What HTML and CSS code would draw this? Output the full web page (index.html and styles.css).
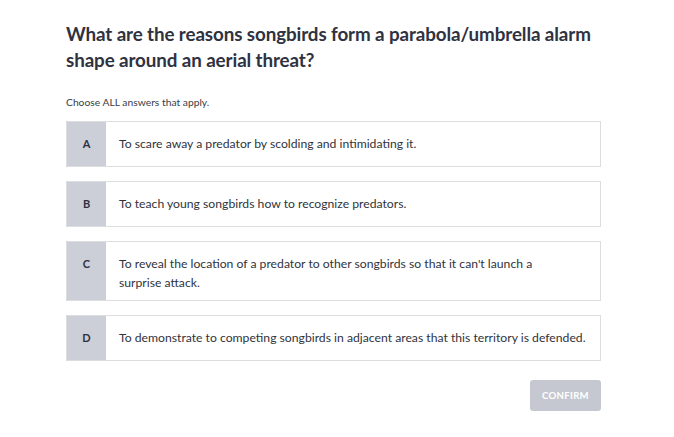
FILE: index.html
```html
<!DOCTYPE html>
<html>
<head>
<meta charset="utf-8">
<link rel="stylesheet" href="styles.css">
</head>
<body>
<div class="quiz">
  <h1 class="title">What are the reasons songbirds form a parabola/umbrella alarm shape around an aerial threat?</h1>
  <p class="hint">Choose ALL answers that apply.</p>
  <div class="options">
    <div class="option"><div class="letter">A</div><div class="text">To scare away a predator by scolding and intimidating it.</div></div>
    <div class="option"><div class="letter">B</div><div class="text">To teach young songbirds how to recognize predators.</div></div>
    <div class="option"><div class="letter">C</div><div class="text">To reveal the location of a predator to other songbirds so that it can't launch a<br>surprise attack.</div></div>
    <div class="option"><div class="letter">D</div><div class="text">To demonstrate to competing songbirds in adjacent areas that this territory is defended.</div></div>
  </div>
  <div class="actions"><button class="confirm">CONFIRM</button></div>
</div>
</body>
</html>
```
FILE: styles.css
```css
html, body { margin: 0; padding: 0; background: #fff; }
body { font-family: Lato, "Open Sans", sans-serif; color: #333640; }
.quiz { width: 535px; margin-left: 66px; padding-top: 21px; }
.title { margin: 0; font-size: 18.8px; line-height: 26px; font-weight: 700; color: #2f3240; letter-spacing: -0.1px; }
.hint { margin: 23px 0 0; font-size: 10.3px; line-height: 12px; color: #3a3d45; }
.options { margin-top: 13px; display: flex; flex-direction: column; gap: 14px; }
.option { display: flex; align-items: stretch; border: 1px solid #dcdde1; min-height: 44px; }
.letter { width: 39px; flex: none; background: #ccced8; padding-top: 12px; line-height: 19px; text-align: center; font-weight: 700; font-size: 11px; color: #2f3240; }
.text { flex: 1; padding: 12px 10px 8px 13px; font-size: 12.2px; line-height: 19px; color: #30333c; }
.actions { display: flex; justify-content: flex-end; margin-top: 19px; }
.confirm { width: 71px; height: 31px; border: none; border-radius: 3px; background: #c6c8d1; color: #fff; font-family: inherit; font-weight: 700; font-size: 9.6px; letter-spacing: 0.3px; padding: 0; }
```
